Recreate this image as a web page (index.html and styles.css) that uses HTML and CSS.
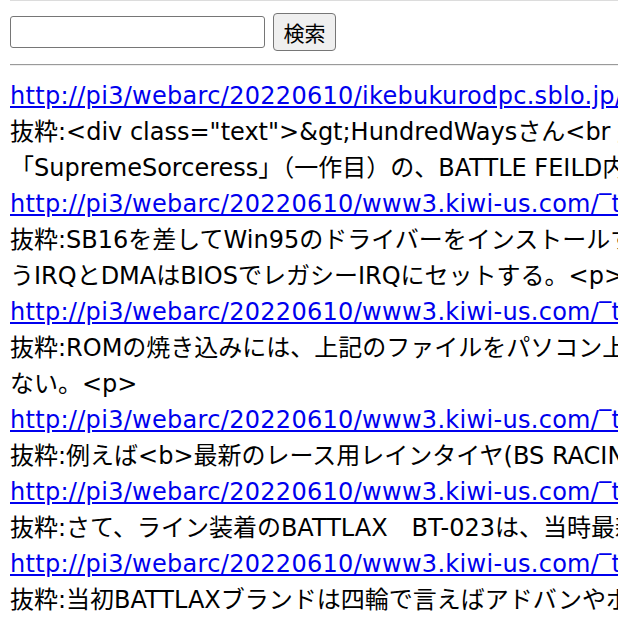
FILE: index.html
```html
<!DOCTYPE html>
<html lang="ja">
<head>
  <meta charset="utf-8" />
  <title>webarc 検索</title>
  <link rel="stylesheet" href="styles.css">
</head>
<body>
  <form class="search" action="#">
    <input type="text" class="search-box" name="q" />
    <button type="submit" class="search-btn">検索</button>
  </form>
  <hr class="rule" />
  <div class="results">
    <div class="item">
      <a class="url" href="#">http://pi3/webarc/20220610/ikebukurodpc.sblo.jp/article/185236091.html</a>
      <div class="excerpt">抜粋:&lt;div class="text"&gt;&amp;gt;HundredWaysさん&lt;br /&gt;
「SupremeSorceress」（一作目）の、BATTLE FEILD内のマップについて</div>
    </div>
    <div class="item">
      <a class="url" href="#">http://pi3/webarc/20220610/www3.kiwi-us.com/‾tiger/pc98/sb16.html</a>
      <div class="excerpt">抜粋:SB16を差してWin95のドライバーをインストールすると、ぶつからないよ
うIRQとDMAはBIOSでレガシーIRQにセットする。&lt;p&gt;</div>
    </div>
    <div class="item">
      <a class="url" href="#">http://pi3/webarc/20220610/www3.kiwi-us.com/‾tiger/pc98/rom.html</a>
      <div class="excerpt">抜粋:ROMの焼き込みには、上記のファイルをパソコン上で結合しなければなら
ない。&lt;p&gt;</div>
    </div>
    <div class="item">
      <a class="url" href="#">http://pi3/webarc/20220610/www3.kiwi-us.com/‾tiger/bike/tire.html</a>
      <div class="excerpt">抜粋:例えば&lt;b&gt;最新のレース用レインタイヤ(BS RACING BATTLAX)&lt;/b&gt;</div>
    </div>
    <div class="item">
      <a class="url" href="#">http://pi3/webarc/20220610/www3.kiwi-us.com/‾tiger/bike/bt023.html</a>
      <div class="excerpt">抜粋:さて、ライン装着のBATTLAX　BT-023は、当時最新のツーリングタイヤ</div>
    </div>
    <div class="item">
      <a class="url" href="#">http://pi3/webarc/20220610/www3.kiwi-us.com/‾tiger/bike/battlax.html</a>
      <div class="excerpt">抜粋:当初BATTLAXブランドは四輪で言えばアドバンやポテンザの位置付け</div>
    </div>
  </div>
</body>
</html>
```

FILE: styles.css
```css
html, body {
  overflow: hidden;
}
body {
  margin: 0 0 0 10px;
  border-top: 1px solid #dcdcdc;
  color: #000;
  font-family: 'DejaVu Sans', 'Noto Sans CJK JP', sans-serif;
}
.search {
  display: flex;
  align-items: center;
  gap: 8px;
  padding-top: 12px;
  margin: 0;
}
.search-box {
  box-sizing: border-box;
  width: 255px;
  height: 32px;
  margin: 0;
  border: 1px solid #767676;
  border-radius: 3px;
  background: #fff;
  font-size: 20px;
}
.search-btn {
  box-sizing: border-box;
  width: 63px;
  height: 38px;
  margin: 0;
  padding: 0;
  border: 1px solid #767676;
  border-radius: 4px;
  background: #efefef;
  color: #000;
  font-family: 'Noto Sans CJK JP', sans-serif;
  font-size: 21px;
}
.rule {
  margin: 13px 0 12px 0;
  border: 0;
  border-top: 1px solid #9a9a9a;
  border-bottom: 1px solid #eeeeee;
}
.results {
  font-size: 24px;
  line-height: 36px;
}
.url {
  display: block;
  white-space: nowrap;
  letter-spacing: 0.3px;
  color: #0000ee;
}
.excerpt {
  white-space: pre;
  color: #000;
}
```
